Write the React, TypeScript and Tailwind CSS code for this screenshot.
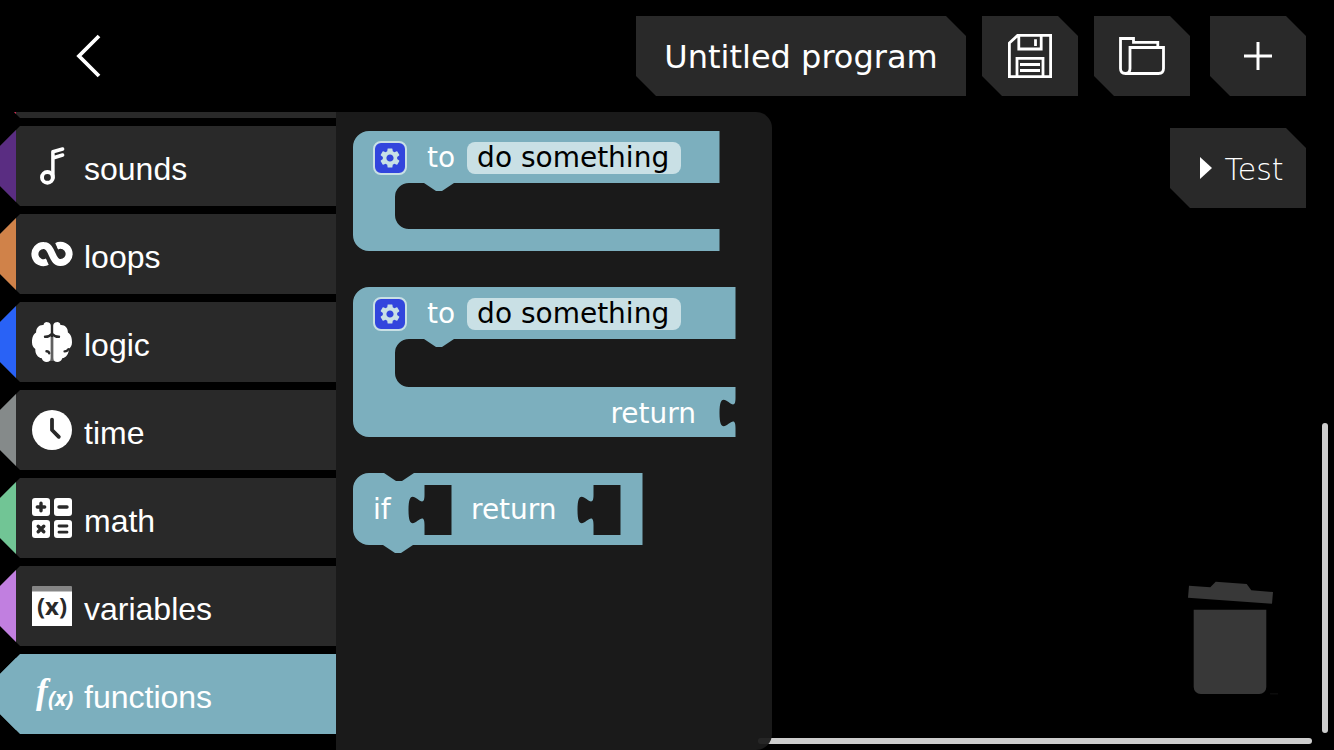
import type { ReactNode } from "react";
import { MdSettings } from "react-icons/md";

const BLOCK = "#7cafbe";
const TILE = "#292929";

const cutCorners =
  "[clip-path:polygon(0_0,calc(100%-20px)_0,100%_20px,100%_100%,20px_100%,0_calc(100%-20px))]";
const tile = `flex h-20 shrink-0 items-center justify-center bg-[#292929] text-white ${cutCorners}`;
const wedge =
  "[clip-path:polygon(20px_0,100%_0,100%_100%,20px_100%,0_60px,0_20px)]";

function Icon({ children }: { children: ReactNode }) {
  return (
    <svg viewBox="0 0 40 40" className="size-10 shrink-0 overflow-visible" fill="none" aria-hidden="true">
      {children}
    </svg>
  );
}

function NoteIcon() {
  return (
    <Icon>
      <g stroke="#fff" strokeWidth="3.9">
        <circle cx="15.4" cy="31.4" r="5.4" />
        <path d="M20.900 32V5.800L30.600 3M21 12L30.600 9" strokeLinejoin="round" strokeLinecap="round" strokeWidth="3.500" />
      </g>
    </Icon>
  );
}

function LoopIcon() {
  return (
    <Icon>
      <path
        d="M15.500 27.700A8.600 8.600 0 1 1 12 11.500C20.500 11.500 19.500 28.500 28 28.500A8.600 8.600 0 1 0 24.500 12.300"
        stroke="#fff"
        strokeWidth="7"
      />
      <path d="M17.600 32l-2-5M22.400 8l2 5" stroke={TILE} strokeWidth="0.8" />
    </Icon>
  );
}

const brainHalf =
  "M18.8 3.6A3.7 3.7 0 0 0 11.5 3C7 2.6 4 6 4.1 10.6 1 12.4 0 16.3 0 20.2c0 3 1.2 5.4 3.3 6.8C3 32 6 35.700 9.800 36.300c.6 2.600 2.600 3.700 4.700 3.700 2.700 0 4.200-1.600 4.300-4z";

function BrainIcon() {
  return (
    <Icon>
      <path d={brainHalf} fill="#fff" />
      <path d={brainHalf} fill="#fff" transform="matrix(-1 0 0 1 40 0)" />
      <path d="M18.500 15h3v24h-3z" fill="#b4b4b4" />
      <path d="M20 15v25" stroke={TILE} strokeWidth="1.2" />
      <g stroke={TILE} strokeWidth="2.4" strokeLinecap="round">
        <path d="M13 14.800c3 .1 5-.8 6.400-2.600M27 14.800c-3 .1-5-.8-6.400-2.600M14.500 29.300c1.500 0 2.500.7 2.700 1.900M36.500 27.200c-1 1.600-2.300 2.300-3.900 2.200" />
      </g>
    </Icon>
  );
}

function ClockIcon() {
  return (
    <Icon>
      <circle cx="20" cy="20" r="20" fill="#fff" />
      <path d="M20 9.6V20l6.8 6.8" stroke={TILE} strokeWidth="3.8" strokeLinecap="round" strokeLinejoin="round" />
    </Icon>
  );
}

function MathIcon() {
  return (
    <Icon>
      <g fill="#fff">
        <rect width="18" height="18" rx="3" />
        <rect x="22" width="18" height="18" rx="3" />
        <rect y="22" width="18" height="18" rx="3" />
        <rect x="22" y="22" width="18" height="18" rx="3" />
      </g>
      <g stroke={TILE} strokeWidth="3.4" strokeLinecap="round">
        <path d="M9 5.3v7.4M5.3 9h7.4M27 9h8" />
        <path d="M6.2 28.2l5.600 5.600M11.800 28.200l-5.600 5.600" />
        <path d="M27 28h8M27 34.200h8" strokeWidth="2.8" />
      </g>
    </Icon>
  );
}

function VariableIcon() {
  return (
    <Icon>
      <path d="M0 5h40v35H0z" fill="#fff" />
      <path d="M0 1Q0 0 1 0h38q1 0 1 1v4.600H0z" fill="#858585" />
      <text x="20" y="29" textAnchor="middle" fontSize="24" fontWeight="700" fontFamily="Open Sans, sans-serif" fill={TILE}>
        (x)
      </text>
    </Icon>
  );
}

function FunctionIcon() {
  return (
    <Icon>
      <text x="4" y="29" fontSize="35" fontWeight="700" fontStyle="italic" fontFamily="Liberation Serif, serif" fill="#fff">
        f
      </text>
      <text x="16" y="32" fontSize="21" fontWeight="700" fontStyle="italic" fontFamily="Open Sans, sans-serif" fill="#fff">
        (x)
      </text>
    </Icon>
  );
}

const categories = [
  { name: "sounds", border: "border-[#5a2d82]", icon: <NoteIcon /> },
  { name: "loops", border: "border-[#d08249]", icon: <LoopIcon /> },
  { name: "logic", border: "border-[#2962f6]", icon: <BrainIcon /> },
  { name: "time", border: "border-[#858a8a]", icon: <ClockIcon /> },
  { name: "math", border: "border-[#71c595]", icon: <MathIcon /> },
  { name: "variables", border: "border-[#c17fe0]", icon: <VariableIcon /> },
  { name: "functions", border: "border-[#7cafbe]", icon: <FunctionIcon />, active: true },
];

function Sidebar() {
  return (
    <nav className="flex w-84 shrink-0 flex-col justify-end gap-2 overflow-hidden pb-4">
      <div className={`h-20 shrink-0 border-l-16 border-[#d02a50] bg-[#292929] ${wedge}`} />
      {categories.map((c) => (
        <button
          key={c.name}
          className={`flex h-20 shrink-0 items-center gap-3 border-l-16 pl-4 text-[32px] leading-10 text-white ${c.border} ${
            c.active ? "bg-[#7cafbe]" : "bg-[#292929]"
          } ${wedge}`}
        >
          {c.icon}
          <span className="pt-1.5 font-['Liberation_Sans',sans-serif]">{c.name}</span>
        </button>
      ))}
    </nav>
  );
}

function Shape({ d, width, height }: { d: string; width: number; height: number }) {
  return (
    <svg
      className="absolute top-0 left-0 -z-10"
      width={width}
      height={height}
      viewBox={`0 0 ${width} ${height}`}
      aria-hidden="true"
    >
      <path d={d} fill={BLOCK} fillRule="evenodd" />
    </svg>
  );
}

function ProcedureHead() {
  return (
    <div className="flex h-[54px] items-center pl-5">
      <button
        aria-label="Block options"
        className="flex size-[34px] items-center justify-center rounded-lg border-2 border-[#c9e0e5] bg-[#3245dd] text-[#c9e0e5]"
      >
        <MdSettings size={24} />
      </button>
      <label className="flex items-center gap-3 pl-5">
        to
        <input
          defaultValue="do something"
          className="h-8 w-[214px] rounded-lg bg-[#c9e0e5] px-2.5 text-black outline-none"
        />
      </label>
    </div>
  );
}

function Flyout() {
  return (
    <section className="relative z-10 flex w-109 shrink-0 flex-col items-start gap-9 rounded-r-2xl bg-[#1c1c1c]/94 px-[17px] pt-[19px] text-[28px] leading-8 text-white">
      <div className="relative isolate h-[120px] w-[367px]">
        <Shape
          width={367}
          height={120}
          d="M0 16A16 16 0 0 1 16 0H366.500V52H101l-12 8h-6l-12-8H56a14 14 0 0 0-14 14V84a14 14 0 0 0 14 14H366.500V120H16A16 16 0 0 1 0 104Z"
        />
        <ProcedureHead />
      </div>
      <div className="relative isolate flex h-[150px] w-[383px] flex-col justify-between">
        <Shape
          width={383}
          height={150}
          d="M0 16A16 16 0 0 1 16 0H382.500V52H101l-12 8h-6l-12-8H56a14 14 0 0 0-14 14V86a14 14 0 0 0 14 14H382.500V111c0 20-16-16-16 15s16-5 16 15V150H16A16 16 0 0 1 0 134Z"
        />
        <ProcedureHead />
        <div className="flex h-[46px] items-center justify-end pr-10">return</div>
      </div>
      <div className="relative isolate flex h-[72px] w-[290px] items-center pt-0.5 pl-5">
        <Shape
          width={290}
          height={80}
          d="M0 16A16 16 0 0 1 16 0H31l12 8h6l12-8H289.500V72H60l-12 8h-6l-12-8H16A16 16 0 0 1 0 56ZM71.500 12H98.500V62H71.500V52c0-20-16 16-16-15s16 5 16-15ZM240.500 12H267.500V62H240.500V52c0-20-16 16-16-15s16 5 16-15Z"
        />
        <span className="w-[98px]">if</span>
        <span>return</span>
      </div>
    </section>
  );
}

function Header() {
  return (
    <header className="flex h-28 shrink-0 items-center pr-7 pl-16">
      <button aria-label="Back" className="flex size-12 items-center justify-center">
        <svg width="26" height="44" viewBox="0 0 26 44" fill="none" stroke="#fff" strokeWidth="3.8" aria-hidden="true">
          <path d="M24 2L4 22 24 42" />
        </svg>
      </button>
      <div className="flex grow justify-end gap-4">
        <button className={`w-[330px] pt-0.5 text-[32px] leading-10 ${tile}`}>Untitled program</button>
        <button aria-label="Save" className={`w-24 ${tile}`}>
          <svg width="44" height="44" viewBox="0 0 44 44" fill="none" stroke="#fff" strokeWidth="2.8" aria-hidden="true">
            <path d="M1.400 9L9.600 1.400H42.600V42.600H1.400ZM10.800 1.400H33.200V15H10.800ZM9 42.600V24.400H35V42.600M12 30.500H32M12 36.500H32" />
            <path d="M27.500 5.200V12" />
          </svg>
        </button>
        <button aria-label="Open" className={`w-24 ${tile}`}>
          <svg width="46" height="38" viewBox="0 0 46 38" fill="none" stroke="#fff" strokeWidth="2.8" aria-hidden="true">
            <path d="M38.800 10.500V5.400H14.500V1.500H1.500V31.500Q1.500 36.500 6.500 36.500H39.500Q44.500 36.500 44.500 31.500V10.500H11V31.500Q11 36.500 6.500 36.500" />
          </svg>
        </button>
        <button aria-label="New" className={`ml-1 w-24 ${tile}`}>
          <svg width="28" height="28" viewBox="0 0 28 28" stroke="#fff" strokeWidth="3" aria-hidden="true">
            <path d="M14 0V28M0 14H28" />
          </svg>
        </button>
      </div>
    </header>
  );
}

function Workspace() {
  return (
    <main className="relative flex grow flex-col items-end justify-between pt-4 pr-7 pb-[55px]">
      <button className={`w-34 gap-3 pl-2 text-[30px] leading-8 font-extralight ${tile}`}>
        <svg width="12" height="22" viewBox="0 0 12 22" fill="#fff" aria-hidden="true">
          <path d="M0 0L12 11 0 22Z" />
        </svg>
        <span className="pt-1">Test</span>
      </button>
      <svg width="118" height="114" viewBox="0 0 118 114" fill="#383838" aria-label="Trash">
        <path d="M1 4.700L22.300 6.300 27.700.7 58.700 3 63.300 9.300 85 11 84 22.700 0 16.700Z" />
        <path d="M5.700 28.800H78.300V106a7 7 0 0 1-7 7H12.700a7 7 0 0 1-7-7Z" />
        <path d="M82 112.500h8v.8h-8z" fill="#161616" />
      </svg>
      <div className="absolute right-1.5 bottom-[17px] h-[310px] w-1.5 rounded-sm bg-[#cdcdcd]" />
      <div className="absolute right-[22px] bottom-1.5 -left-3.5 h-1.5 rounded-sm bg-[#cdcdcd]" />
    </main>
  );
}

export default function App() {
  return (
    <div className="flex h-screen flex-col overflow-hidden bg-black font-['DejaVu_Sans',sans-serif]">
      <Header />
      <div className="flex min-h-0 grow">
        <Sidebar />
        <Flyout />
        <Workspace />
      </div>
    </div>
  );
}
